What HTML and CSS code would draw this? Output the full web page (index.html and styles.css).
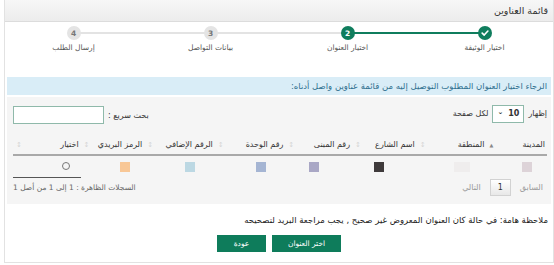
FILE: index.html
```html
<!DOCTYPE html>
<html lang="ar" dir="rtl">
	<head>
		<meta charset="UTF-8">
		<meta name="viewport" content="width=device-width, initial-scale=1.0">
		<title>قائمة العناوين</title>
		<link rel="stylesheet" href="styles.css">
	</head>
	<body>
		<div class="panel">
			<div class="panel-head">قائمة العناوين</div>

			<!-- خطوات الطلب -->
			<div class="steps">
				<div class="step done">
					<span class="dot">
						<svg width="8" height="8" viewBox="0 0 10 10"><path d="M1.5 5.2 L4 7.6 L8.6 2.6" fill="none" stroke="#fff" stroke-width="2" stroke-linecap="round" stroke-linejoin="round"/></svg>
					</span>
					<span class="step-name">اختيار الوثيقة</span>
				</div>
				<div class="step active">
					<span class="dot">2</span>
					<span class="step-name">اختيار العنوان</span>
				</div>
				<div class="step">
					<span class="dot">3</span>
					<span class="step-name">بيانات التواصل</span>
				</div>
				<div class="step">
					<span class="dot">4</span>
					<span class="step-name">إرسال الطلب</span>
				</div>
			</div>

			<div class="content">
				<div class="alert">الرجاء اختيار العنوان المطلوب التوصيل إليه من قائمة عناوين واصل أدناه:</div>

				<div class="grid-box">
					<div class="grid-top">
						<div class="length">
							إظهار
							<span class="select">10 <i>&#8964;</i></span>
							لكل صفحة
						</div>
						<div class="search">
							بحث سريع :
							<span class="search-input"></span>
						</div>
					</div>

					<table class="grid">
						<thead>
							<tr>
								<th class="c1"><div class="th-in"><span>المدينة</span><b class="sort on">&#9650;</b></div></th>
								<th class="c2"><div class="th-in"><span>المنطقة</span><b class="sort">&#8597;</b></div></th>
								<th class="c3"><div class="th-in"><span>اسم الشارع</span><b class="sort">&#8597;</b></div></th>
								<th class="c4"><div class="th-in"><span>رقم المبنى</span><b class="sort">&#8597;</b></div></th>
								<th class="c5"><div class="th-in"><span>رقم الوحدة</span><b class="sort">&#8597;</b></div></th>
								<th class="c6"><div class="th-in"><span>الرقم الإضافي</span><b class="sort">&#8597;</b></div></th>
								<th class="c7"><div class="th-in"><span>الرمز البريدي</span><b class="sort">&#8597;</b></div></th>
								<th class="c8"><div class="th-in"><span>اختيار</span><b class="sort">&#8597;</b></div></th>
							</tr>
						</thead>
						<tbody>
							<tr>
								<td class="d1"><span class="sw sw-city"></span></td>
								<td class="d2"><span class="sw sw-area"></span></td>
								<td class="d3"><span class="sw sw-street"></span></td>
								<td class="d4"><span class="sw sw-bld"></span></td>
								<td class="d5"><span class="sw sw-unit"></span></td>
								<td class="d6"><span class="sw sw-extra"></span></td>
								<td class="d7"><span class="sw sw-zip"></span></td>
								<td class="d8 pick"><span class="radio"></span></td>
							</tr>
						</tbody>
					</table>

					<div class="grid-foot">
						<div class="pager">
							<span class="pg off">السابق</span>
							<span class="pg-btn">1</span>
							<span class="pg off">التالي</span>
						</div>
						<div class="info">السجلات الظاهرة : 1 إلى 1 من أصل 1</div>
					</div>
				</div>

				<p class="note">ملاحظة هامة: في حالة كان العنوان المعروض غير صحيح , يجب مراجعة البريد لتصحيحه</p>

				<div class="actions">
					<button class="btn">اختر العنوان</button>
					<button class="btn">عودة</button>
				</div>
			</div>
		</div>
	</body>
</html>
```

FILE: styles.css
```css
* {
	margin: 0;
	padding: 0;
	box-sizing: border-box;
}

body {
	background: #fff;
	font-family: "DejaVu Sans", sans-serif;
	font-size: 8px;
	color: #333;
}

/* اللوحة */
.panel {
	margin-left: 4px;
	height: 263px;
	border: 1px solid #e2e2e2;
	border-top: none;
	background: #fff;
}

.panel-head {
	height: 22px;
	line-height: 21px;
	padding-right: 5px;
	font-size: 9.5px;
	color: #333;
	background: linear-gradient(#f7f7f7, #ececec);
	border-bottom: 1px solid #dcdcdc;
}

/* الخطوات */
.steps {
	display: grid;
	grid-template-columns: repeat(4, 1fr);
	padding-top: 4px;
}

.step {
	position: relative;
	display: flex;
	flex-direction: column;
	align-items: center;
}

.step + .step::before {
	content: '';
	position: absolute;
	top: 6px;
	left: 50%;
	width: 100%;
	height: 2px;
	background: #e3e3e3;
}

.step.active::before {
	background: #0f7d5d;
}

.dot {
	position: relative;
	z-index: 1;
	width: 14px;
	height: 14px;
	border-radius: 50%;
	background: #e4e4e4;
	color: #777;
	font-size: 7.5px;
	font-weight: bold;
	display: flex;
	align-items: center;
	justify-content: center;
}

.done .dot,
.active .dot {
	background: #0f7d5d;
	color: #fff;
}

.step-name {
	margin-top: 3px;
	font-size: 7.5px;
	color: #555;
}

/* المحتوى */
.content {
	padding: 0 2px;
}

.alert {
	margin-top: 25px;
	height: 18px;
	line-height: 18px;
	padding-right: 4px;
	background: #d9edf7;
	color: #31708f;
	font-size: 8.5px;
}

.grid-box {
	margin-top: 2px;
	height: 107px;
	padding: 7px 4px 0 6px;
	background: #f5f5f5;
}

.grid-top {
	display: flex;
	justify-content: space-between;
	align-items: center;
	height: 19px;
	font-size: 8px;
}

.length,
.search {
	display: flex;
	align-items: center;
	gap: 4px;
}

.select {
	display: inline-flex;
	align-items: center;
	gap: 5px;
	height: 18px;
	padding: 0 4px;
	background: #fff;
	border: 1px solid #8fb9aa;
	font-size: 8px;
	font-weight: bold;
}

.select i {
	font-style: normal;
	font-size: 7px;
	margin-top: -4px;
}

.search {
	margin-top: 3px;
}

.search-input {
	width: 91px;
	height: 18px;
	background: #fff;
	border: 1px solid #8fb9aa;
}

/* الجدول */
.grid {
	width: 100%;
	margin-top: 12px;
	border-collapse: collapse;
}

.grid th {
	height: 20px;
	padding: 0 2px 0 3px;
	font-weight: normal;
	font-size: 8px;
	color: #333;
	text-align: right;
	border-bottom: 2px solid #a9a9a9;
}

.th-in {
	display: flex;
	justify-content: space-between;
	align-items: center;
}

.sort {
	font-weight: normal;
	font-size: 7px;
	color: #d6d6d6;
}

.sort.on {
	font-size: 5px;
	color: #888;
}

.c1 { width: 61px; }
.c2 { width: 70px; }
.c3 { width: 65px; }
.c4 { width: 67px; }
.c5 { width: 71px; }
.c6 { width: 71px; }
.c7 { width: 64px; }
.c8 { width: 68px; }

.grid td {
	height: 22px;
	text-align: right;
	vertical-align: middle;
}

/* مكان المربعات تحت العناوين */
.d1 { padding-right: 15px; }
.d2 { padding-right: 16px; }
.d3 { padding-right: 33px; }
.d4 { padding-right: 33px; }
.d5 { padding-right: 19px; }
.d6 { padding-right: 20px; }
.d7 { padding-right: 14px; }
.d8 { padding-right: 11px; }

.grid td.pick {
	border-bottom: 1px solid #555;
}

.sw {
	display: inline-block;
	width: 10px;
	height: 10px;
	vertical-align: middle;
}

.sw-city { background: #ddd3d8; }
.sw-area { background: #efeded; width: 16px; }
.sw-street { background: #3f3a3b; }
.sw-bld { background: #a9a7c5; }
.sw-unit { background: #a5b5d3; }
.sw-extra { background: #bcd8e3; }
.sw-zip { background: #f8c796; }

.radio {
	display: inline-block;
	width: 8px;
	height: 8px;
	border: 1px solid #777;
	border-radius: 50%;
	vertical-align: middle;
}

.grid-foot {
	display: flex;
	justify-content: space-between;
	align-items: center;
	margin-top: 1px;
	font-size: 7.5px;
}

.pager {
	display: flex;
	align-items: center;
	gap: 9px;
	padding-right: 4px;
	font-size: 8px;
}

.pg.off {
	color: #999;
}

.pg-btn {
	padding: 3px 7px;
	border: 1px solid #d2d2d2;
	background: linear-gradient(#fff, #e8e8e8);
	color: #333;
}

.info {
	color: #666;
}

.note {
	margin-top: 11px;
	padding-right: 3px;
	font-size: 8.5px;
	color: #222;
}

.actions {
	display: flex;
	justify-content: center;
	gap: 6px;
	margin-top: 10px;
}

.btn {
	height: 17px;
	border: none;
	background: #0e7c5b;
	color: #fff;
	font-family: inherit;
	font-size: 7.5px;
}

.btn:first-child {
	width: 69px;
}

.btn:last-child {
	width: 49px;
}
```
